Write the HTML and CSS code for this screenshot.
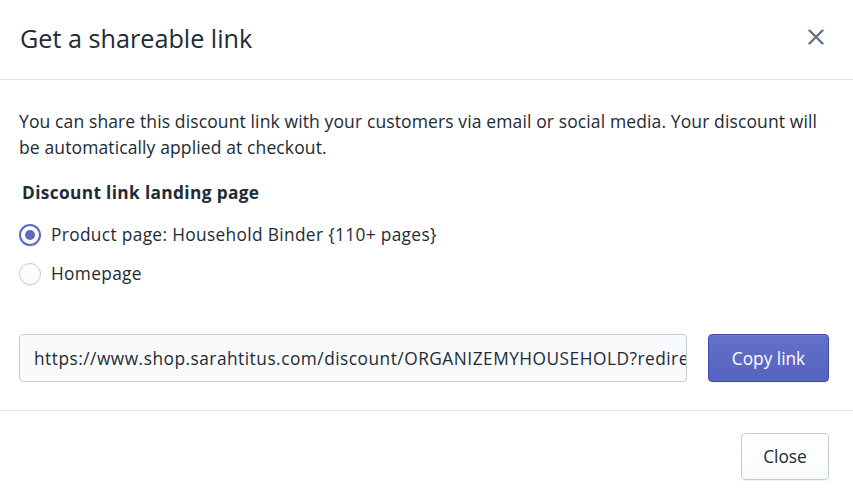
FILE: index.html
```html
<!DOCTYPE html>
<html>
<head>
<meta charset="utf-8">
<link rel="stylesheet" href="styles.css">
</head>
<body>
<div class="modal">
  <header class="modal-header">
    <h2 class="modal-title">Get a shareable link</h2>
    <button class="icon-close" aria-label="Close">
      <svg width="20" height="20" viewBox="0 0 20 20"><path d="M3.5 3.5 L16.5 16.5 M16.5 3.5 L3.5 16.5" stroke="#637381" stroke-width="2.4" stroke-linecap="round" fill="none"/></svg>
    </button>
  </header>
  <section class="modal-body">
    <p class="desc">You can share this discount link with your customers via email or social media. Your discount will be automatically applied at checkout.</p>
    <h3 class="group-title">Discount link landing page</h3>
    <div class="choices">
      <label class="choice"><span class="radio checked"><span class="dot"></span></span><span>Product page: Household Binder {110+ pages}</span></label>
      <label class="choice"><span class="radio"></span><span>Homepage</span></label>
    </div>
    <div class="link-row">
      <input class="field" type="text" readonly value="https://www.shop.sarahtitus.com/discount/ORGANIZEMYHOUSEHOLD?redirect=/products/household-binder">
      <button class="btn primary">Copy link</button>
    </div>
  </section>
  <footer class="modal-footer">
    <button class="btn">Close</button>
  </footer>
</div>
</body>
</html>
```

FILE: styles.css
```css
* { box-sizing: border-box; }
html, body { margin: 0; padding: 0; background: #fff; }
body {
  font-family: "Open Sans", "Noto Sans", sans-serif;
  color: #212b36;
  width: 853px;
  height: 494px;
  overflow: hidden;
}
.modal { display: flex; flex-direction: column; }
.modal-header {
  height: 80px;
  display: flex;
  align-items: center;
  justify-content: space-between;
  padding: 0 27px 0 20px;
  border-bottom: 1px solid #dfe3e8;
}
.modal-title {
  margin: 0;
  font-weight: 400;
  font-size: 25.2px;
  color: #212b36;
  padding-bottom: 4px;
}
.icon-close {
  border: 0;
  background: none;
  padding: 0;
  width: 20px;
  height: 20px;
  display: flex;
  margin-bottom: 6px;
}
.modal-body {
  padding: 28px 20px 28px 19px;
  border-bottom: 1px solid #dfe3e8;
}
.desc {
  margin: 0;
  max-width: 815px;
  font-size: 17.5px;
  letter-spacing: 0.12px;
  line-height: 26px;
}
.group-title {
  margin: 21px 0 0 3px;
  font-size: 17.3px;
  font-weight: 700;
  letter-spacing: 0.35px;
  line-height: 24px;
}
.choices { margin-top: 17px; display: flex; flex-direction: column; gap: 13px; }
.choice {
  display: flex;
  align-items: center;
  gap: 10px;
  font-size: 17.3px;
  letter-spacing: 0.35px;
  line-height: 26px;
}
.radio {
  width: 22px;
  height: 22px;
  border-radius: 50%;
  border: 1px solid #c4cdd5;
  background: linear-gradient(#fff, #f9fafb);
  box-shadow: 0 1px 1px rgba(22,29,37,0.08);
  display: flex;
  align-items: center;
  justify-content: center;
}
.radio.checked { border: 2px solid #5c6ac4; }
.dot { width: 10px; height: 10px; border-radius: 50%; background: #5c6ac4; }
.link-row {
  margin-top: 47px;
  display: flex;
  align-items: center;
  gap: 21px;
  padding-right: 4px;
}
.field {
  flex: 1;
  min-width: 0;
  height: 48px;
  border: 1px solid #c4cdd5;
  border-radius: 4px;
  background: #f9fafb;
  font-family: inherit;
  color: #212b36;
  font-size: 17.3px;
  letter-spacing: 0.5px;
  padding: 0 0 0 14px;
  margin: 0;
  outline: none;
}
.btn {
  font-family: inherit;
  font-size: 17.3px;
  height: 48px;
  padding: 0 20px;
  border-radius: 4px;
  border: 1px solid #c4cdd5;
  background: linear-gradient(#fff, #f9fafb);
  color: #212b36;
  box-shadow: 0 1px 0 rgba(22,29,37,0.05);
}
.btn.primary {
  width: 121px;
  color: #fff;
  border-color: #3f4eae;
  background: linear-gradient(#6371c7, #5563c1);
  box-shadow: inset 0 1px 0 #6f7bcb, 0 1px 0 rgba(22,29,37,0.05);
}
.modal-footer {
  display: flex;
  justify-content: flex-end;
  padding: 22px 24px 0 20px;
}
.modal-footer .btn { width: 88px; height: 47px; padding: 0; }
```
